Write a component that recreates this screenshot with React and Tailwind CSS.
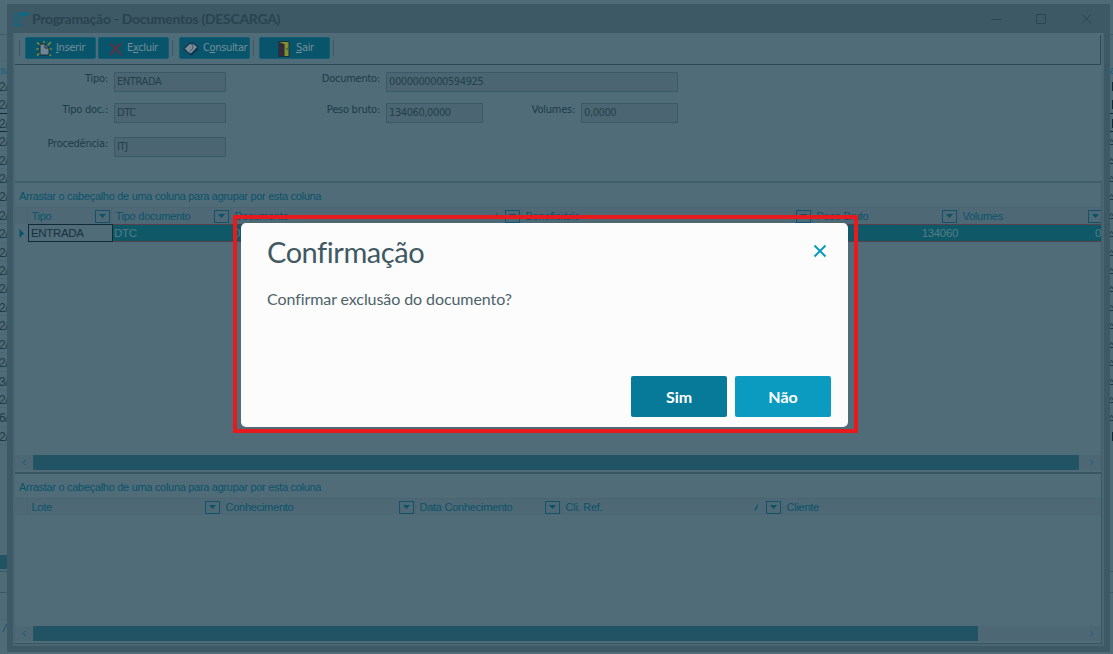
import React from 'react';

const leftRows = ['2', '2', '2', '2', '2', '2', '2', '2', '2', '2', '2', '2', '2', '2', '2', '2', '3', '2', '6', '2'];

const documentColumns = [
  { label: 'Tipo', width: 84 },
  { label: 'Tipo documento', width: 119 },
  { label: 'Documento', width: 291, sorted: true },
  { label: 'Beneficiário', width: 291 },
  { label: 'Peso Bruto', width: 146 },
  { label: 'Volumes', width: 146 },
];

const lotColumns = [
  { label: 'Lote', width: 194 },
  { label: 'Conhecimento', width: 194 },
  { label: 'Data Conhecimento', width: 146 },
  { label: 'Cli. Ref.', width: 221, sorted: true },
  { label: 'Cliente', width: 400 },
];

const InsertIcon = () => (
  <svg className="shrink-0" width="16" height="16" viewBox="0 0 16 16">
    <path d="M1 1.500l3 2.500M8 0v2.500M15 1l-3.500 3.500M0 8h3M13 8h3M1 14.500l3-2.500M15 15l-3-3" stroke="#8f9b32" strokeWidth="1.200" />
    <path d="M4 3h5l4 4v7H4z" fill="#718692" stroke="#142f3d" />
    <path d="M9 3v4h4" fill="none" stroke="#142f3d" />
  </svg>
);

const DeleteIcon = () => (
  <svg className="shrink-0" width="14" height="14" viewBox="0 0 14 14">
    <path d="M1 1.500C5 4 9 8.500 12.500 13M12.500 1.500C8 4.500 4 9 1.500 13" fill="none" stroke="#65313f" strokeWidth="1.800" />
  </svg>
);

const BookIcon = () => (
  <svg className="shrink-0" width="16" height="15" viewBox="0 0 16 15">
    <path d="M1 7.500L7 2l2 1 1-1 5 4-7 7.500-2-1.500H5z" fill="#7b8d98" stroke="#14334f" strokeWidth="1.200" />
    <path d="M9 3l1 4-4.500 5" fill="none" stroke="#294d61" strokeWidth=".8" />
    <path d="M15 7l-7 7" stroke="#14334f" strokeWidth="1.800" />
  </svg>
);

const DoorIcon = () => (
  <svg className="shrink-0" width="12" height="16" viewBox="0 0 12 16">
    <path d="M1 .5h10v15H1z" fill="#80902c" stroke="#182e39" />
    <path d="M1 1l5 2v12H1z" fill="#38283a" />
    <path d="M6 3v12" stroke="#182e39" />
    <path d="M8 8h2" stroke="#27434c" />
  </svg>
);

const ToolButton = ({ icon, before = '', hotkey, after, className }) => (
  <button className={`flex h-[22px] w-[71px] shrink-0 items-center rounded-[2px] border border-[#105f76] bg-[#08546a] pt-px font-['DejaVu_Sans_Condensed',sans-serif] text-[11px] tracking-[-.35px] text-[#748e9a] ${className}`}>
    {icon}
    <span className="ml-[4px] whitespace-nowrap">
      {before}<u className="underline-offset-[1px]">{hotkey}</u>{after}
    </span>
  </button>
);

const Separator = ({ className }) => <div className={`h-[16px] w-px bg-[#3c5966] ${className}`} />;

const Field = ({ label, value, labelClass, inputClass }) => (
  <div className="flex h-[20px]">
    <label className={`-mt-[1px] shrink-0 text-right leading-4 text-[#1d3b48] ${labelClass}`}>{label}</label>
    <div className={`ml-[6px] h-[20px] shrink-0 rounded-[1px] border border-[#3a5966] bg-[#4b6672] pl-[2px] leading-[18px] tracking-[-.4px] text-[#243f4b] ${inputClass}`}>
      {value}
    </div>
  </div>
);

const FilterButton = () => (
  <span className="flex h-[13px] w-[15px] shrink-0 items-center justify-center border border-[#11546a]">
    <svg width="7" height="4" viewBox="0 0 7 4"><path d="M0 0h7L3.500 4z" fill="#07536a" /></svg>
  </span>
);

const GroupHint = () => (
  <div className="h-[24px] shrink-0 whitespace-nowrap pl-[4px] pt-[5px] text-[11px] leading-4 tracking-[-.3px]">
    Arrastar o cabeçalho de uma coluna para agrupar por esta coluna
  </div>
);

const HeaderRow = ({ columns }) => (
  <div className="flex h-[17px] shrink-0 overflow-hidden border-t border-[#496571] bg-[#4e6975] text-[11px] tracking-[-.25px]">
    <div className="w-[13px] shrink-0 border-r border-[#4a6572]" />
    {columns.map((column) => (
      <div key={column.label} className="flex shrink-0 items-center border-r border-[#4a6572] pl-[3.500px] pr-[1px]" style={{ width: column.width }}>
        <span className="whitespace-nowrap leading-4">{column.label}</span>
        <span className="grow" />
        {column.sorted && (
          <svg className="mr-[4px]" width="8" height="7" viewBox="0 0 8 7">
            <path d="M1 6.500L4 .5" stroke="#07536a" strokeWidth="1.300" />
            <path d="M4 .5l3 6H1" fill="none" stroke="#45717f" strokeWidth=".8" />
          </svg>
        )}
        <FilterButton />
      </div>
    ))}
  </div>
);

const ScrollBar = ({ thumbClass }) => (
  <div className="flex h-[15px] shrink-0 items-center bg-[#4d6874]">
    <svg className="ml-[7px] mr-[7px] shrink-0" width="4" height="7" viewBox="0 0 4 7"><path d="M3.500 1L1 3.500 3.500 6" fill="none" stroke="#175c70" /></svg>
    <div className={`h-[15px] bg-[#225365] ${thumbClass}`} />
    <div className="grow" />
    <svg className="mr-[7px] shrink-0" width="4" height="7" viewBox="0 0 4 7"><path d="M.5 1L3 3.500.5 6" fill="none" stroke="#175c70" /></svg>
  </div>
);

// Slice of the window behind, left side
const LeftStrip = () => (
  <div className="flex h-[648px] w-[7px] shrink-0 flex-col overflow-hidden bg-[#506b78] text-[12px] text-[#1e3b47]">
    <div className="h-[31px] shrink-0 border-b border-[#3f5c69]" />
    <div className="h-[27px] shrink-0 border-b border-[#496571]" />
    <div className="h-[15px] shrink-0 whitespace-nowrap text-[11px] leading-4 text-[#0b6280]">s/</div>
    {leftRows.map((value, i) => (
      <div key={i} className={`h-[18.420px] shrink-0 -indent-[1px] whitespace-nowrap border-b leading-[20px] tracking-[-.5px] ${i === 1 || i === 2 ? 'border-[#102b37]' : 'border-[#4a6673]'}`}>
        {value}/
      </div>
    ))}
    <div className="mt-[110px] h-[14px] shrink-0 bg-[#225365]" />
    <div className="mt-[2px] h-[22px] shrink-0 border-y border-[#3b5865]" />
    <div className="h-[27px] shrink-0 border-b border-[#496571]" />
    <div className="shrink-0 pl-[3px] text-[11px] italic leading-4 text-[#0a556c]">/</div>
  </div>
);

const RightStrip = () => (
  <div className="flex h-[648px] w-[3px] shrink-0 flex-col overflow-hidden bg-[#506b78] text-[11px]">
    <div className="h-[31px] shrink-0 border-b border-[#3f5c69]" />
    <div className="h-[27px] shrink-0" />
    <div className="h-[15px] shrink-0 leading-4 text-[#0b6280]">a</div>
    {leftRows.map((_, i) => (
      <div key={i} className={`flex h-[18.420px] shrink-0 flex-col items-end ${i === 1 || i === 2 ? 'border-b border-[#102b37]' : ''}`}>
        {i < 3 || i === 19 ? (
          <div className="mt-[5px] h-[9px] w-px bg-[#102b37]" />
        ) : (
          <>
            <svg className="mt-[6px] shrink-0" width="3" height="5" viewBox="0 0 3 5"><path d="M0 4L1.500 1 3 4" fill="none" stroke="#29434f" /></svg>
            <div className="mt-[1px] h-px w-[3px] bg-[#1d3844]" />
          </>
        )}
      </div>
    ))}
    <div className="mt-[126px] h-[22px] shrink-0 border-y border-[#3b5865]" />
  </div>
);

const Toolbar = () => (
  <div className="mr-[1px] flex h-[30px] shrink-0 items-start border-b border-r border-[#2b4956] pt-[2px]">
    <Separator className="ml-[4px] mt-[3px]" />
    <ToolButton className="ml-[5px] pl-[10px]" icon={<InsertIcon />} hotkey="I" after="nserir" />
    <ToolButton className="ml-[2px] pl-[10px]" icon={<DeleteIcon />} before="E" hotkey="x" after="cluir" />
    <Separator className="ml-[3px] mt-[3px]" />
    <ToolButton className="ml-[6px] pl-[3px]" icon={<BookIcon />} before="C" hotkey="o" after="nsultar" />
    <Separator className="ml-[3px] mt-[3px]" />
    <ToolButton className="ml-[5px] gap-[2px] pl-[18px]" icon={<DoorIcon />} hotkey="S" after="air" />
    <Separator className="ml-[3px] mt-[3px]" />
  </div>
);

const DocumentForm = () => (
  <div className="flex h-[116px] shrink-0 pt-[7px] font-['DejaVu_Sans_Condensed',sans-serif] text-[11px] tracking-[-.25px]">
    <div className="flex flex-col">
      <Field label="Tipo:" value="ENTRADA" labelClass="w-[93px]" inputClass="w-[112px]" />
      <div className="h-[11px]" />
      <Field label="Tipo doc.:" value="DTC" labelClass="w-[93px]" inputClass="w-[112px]" />
      <div className="h-[14px]" />
      <Field label="Procedência:" value="ITJ" labelClass="w-[93px]" inputClass="w-[112px]" />
    </div>
    <div className="ml-[74px] flex flex-col gap-[11px]">
      <Field label="Documento:" value="0000000000594925" labelClass="w-[80px]" inputClass="w-[292px]" />
      <div className="flex">
        <Field label="Peso bruto:" value="134060,0000" labelClass="w-[80px]" inputClass="w-[97px]" />
        <Field label="Volumes:" value="0,0000" labelClass="w-[92px]" inputClass="w-[97px]" />
      </div>
    </div>
  </div>
);

const ConfirmDialog = () => (
  <div className="absolute left-[233px] top-[215px] h-[218px] w-[625px] border-4 border-[#e71b1d] p-[4px] pr-[6px] pb-[2px] font-[Lato,sans-serif]">
    <div className="flex h-[204px] w-[607px] flex-col rounded-[5px] bg-[#fcfcfc] pl-[26px] pr-[17px]">
      <div className="flex justify-between">
        <h2 className="mt-[10px] whitespace-nowrap text-[29px] leading-[38px] tracking-[-.45px] text-[#405963]">Confirmação</h2>
        <svg className="mr-[4px] mt-[21px]" width="14" height="14" viewBox="0 0 14 14">
          <path d="M1.500 1.500l11 11M12.500 1.500l-11 11" stroke="#0b9bc1" strokeWidth="2" />
        </svg>
      </div>
      <p className="mt-[18px] whitespace-nowrap text-[16px] leading-5 tracking-[-.08px] text-[#4d626b]">Confirmar exclusão do documento?</p>
      <div className="mt-[67px] flex justify-end gap-2 text-[16px] font-bold text-white">
        <button className="h-[41px] w-24 rounded-[2px] bg-[#087a99]">Sim</button>
        <button className="h-[41px] w-24 rounded-[2px] bg-[#0c9bc0]">Não</button>
      </div>
    </div>
  </div>
);

const App = () => {
  return (
    <div className="relative h-[654px] w-[1113px] overflow-hidden bg-[#506b78] pt-[4px] font-['Liberation_Sans',sans-serif] text-[#0a536a]">
      <div className="flex h-[648px]">
        <LeftStrip />
        <div className="flex h-[648px] w-[1103px] shrink-0 flex-col bg-[#3d5966] px-[6px] pb-[6px]">
          {/* Title bar */}
          <div className="flex h-[29px] shrink-0 items-center">
            <svg className="ml-[1px]" width="15" height="14" viewBox="0 0 15 14">
              <path d="M1 1.500h4l9.500-1.500v2.500L6 4.500M1.500 1v12M0 13h8M4 4.500l2 3-2.500 5" fill="none" stroke="#126881" strokeWidth="1.400" />
              <path d="M4.500 1.500L14 .5v2L6 4.500z" fill="#126881" />
            </svg>
            <h1 className="ml-[3px] whitespace-nowrap font-[Lato,sans-serif] text-[14px] font-bold leading-5 tracking-[-.3px] text-[#29444f]">Programação - Documentos (DESCARGA)</h1>
            <div className="grow" />
            <svg className="mr-[11px]" width="102" height="12" viewBox="0 0 102 12">
              <path d="M.5 6.500h10M45.500 1.500h9v9h-9zM91 1.500l9 9M100 1.500l-9 9" fill="none" stroke="#2a4652" />
            </svg>
          </div>

          <div className="flex h-[613px] flex-col border-x-2 border-b-2 border-[#4a6673] bg-[#506c78] pt-[2px]">
            <Toolbar />
            <DocumentForm />

            {/* Documents */}
            <div className="flex h-[291px] shrink-0 flex-col overflow-hidden border-r border-t-2 border-[#405d6a]">
              <GroupHint />
              <HeaderRow columns={documentColumns} />
              <div className="flex h-[18px] shrink-0 overflow-hidden text-[11.500px] leading-4 tracking-[-.35px] text-[#557c86]">
                <div className="flex w-[13px] shrink-0 items-center pl-[4px]">
                  <svg width="6" height="9" viewBox="0 0 6 9"><path d="M.5 0L5 4.500.5 9z" fill="#07536a" /></svg>
                </div>
                <div className="w-[85px] shrink-0 border border-[#102b37] pl-[2px] text-[#17323e]">ENTRADA</div>
                <div className="flex grow border-y border-[#55404c] bg-[#0e5868]">
                  <div className="w-[118px] shrink-0 pl-[1px]">DTC</div>
                  <div className="w-[291px] shrink-0 pl-[3px]">0</div>
                  <div className="w-[291px] shrink-0" />
                  <div className="w-[145px] shrink-0 text-right">134060</div>
                  <div className="w-[146px] shrink-0 pr-[3px] text-right">0</div>
                </div>
              </div>
              <div className="grow" />
              <ScrollBar thumbClass="w-[1046px]" />
              <div className="h-[2px] shrink-0" />
            </div>

            {/* Lots */}
            <div className="flex h-[172px] shrink-0 flex-col overflow-hidden border-b border-r border-t-2 border-[#395663]">
              <GroupHint />
              <HeaderRow columns={lotColumns} />
              <div className="grow" />
              <ScrollBar thumbClass="w-[945px]" />
              <div className="h-[2px] shrink-0" />
            </div>
          </div>
        </div>
        <RightStrip />
      </div>
      <ConfirmDialog />
    </div>
  );
};

export default App;
